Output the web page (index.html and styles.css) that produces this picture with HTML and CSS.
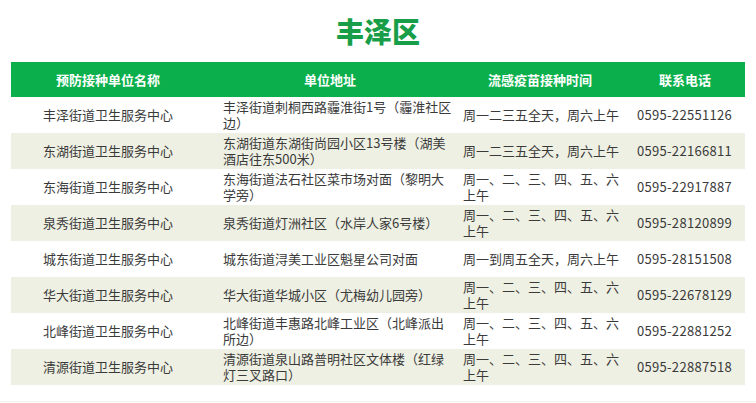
FILE: index.html
```html
<!DOCTYPE html>
<html lang="zh-CN">
<head>
<meta charset="utf-8">
<title>丰泽区</title>
<link rel="stylesheet" href="styles.css">
</head>
<body>
<h1 class="title">丰泽区</h1>
<table class="sites">
  <colgroup>
    <col class="c-name">
    <col class="c-addr">
    <col class="c-time">
    <col class="c-tel">
  </colgroup>
  <thead>
    <tr>
      <th>预防接种单位名称</th>
      <th>单位地址</th>
      <th>流感疫苗接种时间</th>
      <th>联系电话</th>
    </tr>
  </thead>
  <tbody>
    <tr>
      <td class="name">丰泽街道卫生服务中心</td>
      <td class="addr">丰泽街道刺桐西路霾淮街1号（霾淮社区边）</td>
      <td class="time">周一二三五全天，周六上午</td>
      <td class="tel">0595-22551126</td>
    </tr>
    <tr>
      <td class="name">东湖街道卫生服务中心</td>
      <td class="addr">东湖街道东湖街尚园小区13号楼（湖美酒店往东500米）</td>
      <td class="time">周一二三五全天，周六上午</td>
      <td class="tel">0595-22166811</td>
    </tr>
    <tr>
      <td class="name">东海街道卫生服务中心</td>
      <td class="addr">东海街道法石社区菜市场对面（黎明大学旁）</td>
      <td class="time">周一、二、三、四、五、六上午</td>
      <td class="tel">0595-22917887</td>
    </tr>
    <tr>
      <td class="name">泉秀街道卫生服务中心</td>
      <td class="addr">泉秀街道灯洲社区（水岸人家6号楼）</td>
      <td class="time">周一、二、三、四、五、六上午</td>
      <td class="tel">0595-28120899</td>
    </tr>
    <tr>
      <td class="name">城东街道卫生服务中心</td>
      <td class="addr">城东街道浔美工业区魁星公司对面</td>
      <td class="time">周一到周五全天，周六上午</td>
      <td class="tel">0595-28151508</td>
    </tr>
    <tr>
      <td class="name">华大街道卫生服务中心</td>
      <td class="addr">华大街道华城小区（尤梅幼儿园旁）</td>
      <td class="time">周一、二、三、四、五、六上午</td>
      <td class="tel">0595-22678129</td>
    </tr>
    <tr>
      <td class="name">北峰街道卫生服务中心</td>
      <td class="addr">北峰街道丰惠路北峰工业区（北峰派出所边）</td>
      <td class="time">周一、二、三、四、五、六上午</td>
      <td class="tel">0595-22881252</td>
    </tr>
    <tr>
      <td class="name">清源街道卫生服务中心</td>
      <td class="addr">清源街道泉山路普明社区文体楼（红绿灯三叉路口）</td>
      <td class="time">周一、二、三、四、五、六上午</td>
      <td class="tel">0595-22887518</td>
    </tr>
  </tbody>
</table>
<div class="bottom-rule"></div>
</body>
</html>
```
FILE: styles.css
```css
html, body {
  margin: 0;
  padding: 0;
  background: #ffffff;
}
body {
  width: 756px;
  height: 403px;
  overflow: hidden;
  position: relative;
  font-family: "Noto Sans CJK SC", "Noto Sans", sans-serif;
  color: #3a3a3a;
}
.title {
  margin: 0;
  padding: 17px 0 17px;
  height: 28px;
  line-height: 28px;
  font-size: 28px;
  font-weight: 900;
  text-align: center;
  color: #189e48;
}
.sites {
  margin: 0 11px 0 11px;
  width: 734px;
  border-collapse: collapse;
  table-layout: fixed;
  font-size: 13px;
}
.c-name { width: 194px; }
.c-addr { width: 250px; }
.c-time { width: 170px; }
.c-tel { width: 120px; }
.sites th {
  height: 35px;
  padding: 0;
  background: #0bb04c;
  color: #ffffff;
  font-weight: 700;
  font-size: 13px;
  text-align: center;
  vertical-align: middle;
}
.sites td {
  height: 36px;
  padding: 0;
  line-height: 16px;
  vertical-align: middle;
}
.sites tbody tr:nth-child(even) td {
  background: #eef0e3;
}
.sites td.name {
  text-align: center;
}
.sites td.addr {
  padding: 0 3px 0 18px;
}
.sites td.time {
  padding: 0 0 0 8px;
}
.sites td.tel {
  padding: 0 0 0 12px;
  letter-spacing: 0.3px;
}
.bottom-rule {
  position: absolute;
  left: 0;
  right: 0;
  bottom: 1px;
  height: 1px;
  background: #f0f0ec;
}
```
